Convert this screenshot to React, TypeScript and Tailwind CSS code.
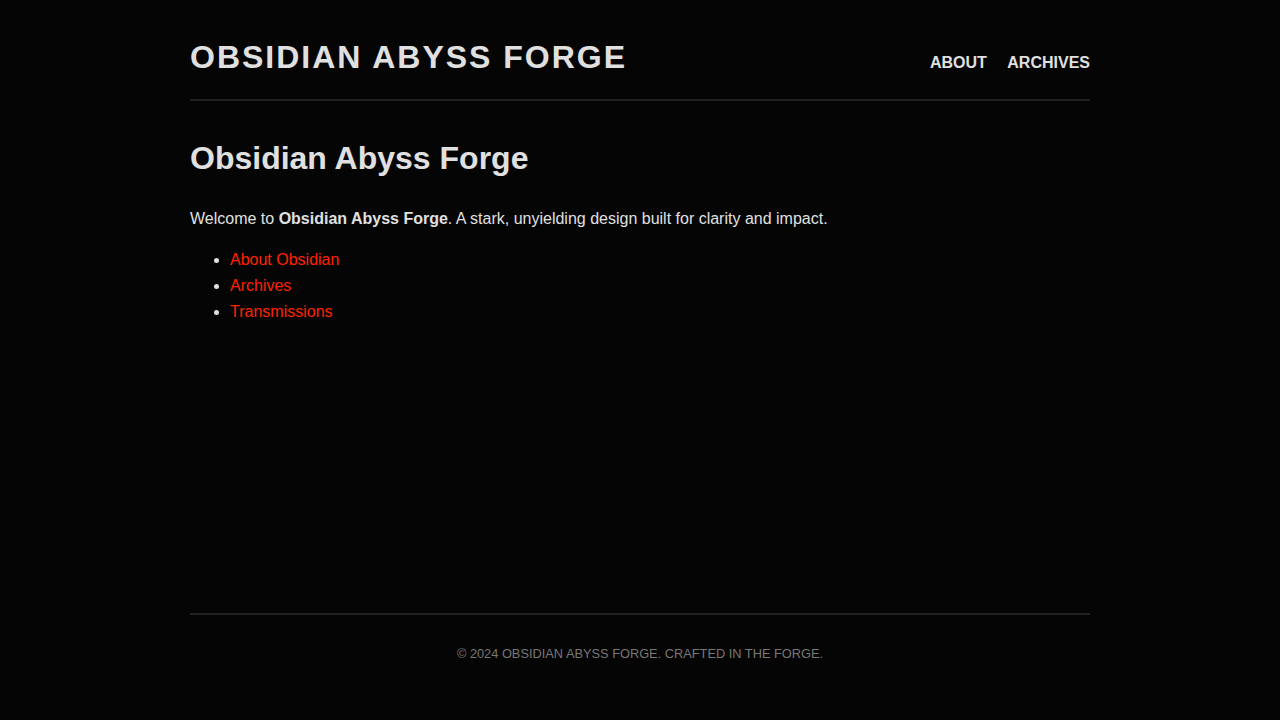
import React from "react";

export default function App() {
  return (
    <div
      className="min-h-screen bg-[#050505] text-[#e0e0e0] flex flex-col"
      style={{ fontFamily: '"Liberation Sans", Arial, sans-serif' }}
    >
      <div className="w-[900px] mx-auto flex flex-col flex-1">
        <header className="pt-[39px] pb-[24px] border-b-2 border-[#222222] flex items-baseline justify-between">
          <div className="text-[32px] leading-[36px] font-bold uppercase tracking-[2px] text-[#e0e0e0]">
            Obsidian Abyss Forge
          </div>
          <nav className="flex items-baseline gap-[20.5px] text-[16px] font-bold uppercase">
            <a href="#" className="text-[#e0e0e0]">About</a>
            <a href="#" className="text-[#e0e0e0]">Archives</a>
          </nav>
        </header>
        <main className="flex-1 pt-[39px]">
          <h1 className="text-[32px] leading-[36px] font-bold mb-[30px]">Obsidian Abyss Forge</h1>
          <p className="text-[16px] leading-[25.6px] mb-[15px]">
            Welcome to <strong className="font-bold">Obsidian Abyss Forge</strong>. A stark, unyielding design built for clarity and impact.
          </p>
          <ul className="list-disc pl-[40px] text-[16px] leading-[26px]">
            <li><a href="#" className="text-[#ff2200]">About Obsidian</a></li>
            <li><a href="#" className="text-[#ff2200]">Archives</a></li>
            <li><a href="#" className="text-[#ff2200]">Transmissions</a></li>
          </ul>
        </main>
        <footer className="border-t-2 border-[#222222] pt-[29px] pb-[56px] text-center text-[12.8px] leading-[20.5px] uppercase text-[#777777]">
          © 2024 Obsidian Abyss Forge. Crafted in the forge.
        </footer>
      </div>
    </div>
  );
}
